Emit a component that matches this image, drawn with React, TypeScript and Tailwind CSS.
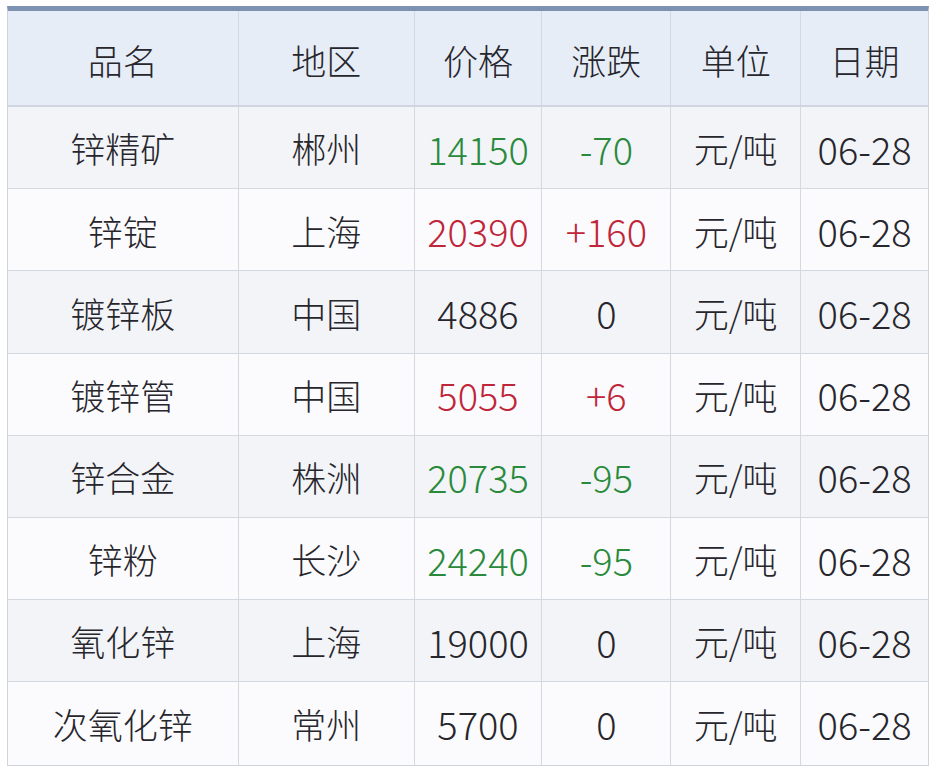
import React from "react";

type Row = { name: string; area: string; price: string; change: string; color: "green" | "red" | "black" };

const rows: Row[] = [
  { name: "锌精矿", area: "郴州", price: "14150", change: "-70", color: "green" },
  { name: "锌锭", area: "上海", price: "20390", change: "+160", color: "red" },
  { name: "镀锌板", area: "中国", price: "4886", change: "0", color: "black" },
  { name: "镀锌管", area: "中国", price: "5055", change: "+6", color: "red" },
  { name: "锌合金", area: "株洲", price: "20735", change: "-95", color: "green" },
  { name: "锌粉", area: "长沙", price: "24240", change: "-95", color: "green" },
  { name: "氧化锌", area: "上海", price: "19000", change: "0", color: "black" },
  { name: "次氧化锌", area: "常州", price: "5700", change: "0", color: "black" },
];

const widths = ["w-[230px]", "w-[176px]", "w-[128px]", "w-[129px]", "w-[130px]", "w-[128px]"];

function colorClass(c: Row["color"]) {
  if (c === "green") return "text-[#2a8a3c]";
  if (c === "red") return "text-[#c0263a]";
  return "text-[#26262c]";
}

export default function App() {
  const headers = ["品名", "地区", "价格", "涨跌", "单位", "日期"];
  return (
    <div className="w-[934px] h-[778px] bg-white pt-[6px] pl-[7px]" style={{ fontFamily: '"Noto Sans CJK SC", "Noto Sans", sans-serif' }}>
      <div className="w-[922px] border-t-[5px] border-t-[#7d92b0] border-l border-r border-b border-[#cfd4dc]">
        <div className="flex h-[96px] bg-[#e6edf7] border-b-2 border-[#cfd6e0]">
          {headers.map((h, i) => (
            <div
              key={h}
              className={`${widths[i]} flex items-center justify-center pt-[4px] text-[35px] font-light text-[#26262c] ${i > 0 ? "border-l border-[#d3d9e2]" : ""}`}
            >
              {h}
            </div>
          ))}
        </div>
        {rows.map((r, idx) => (
          <div
            key={r.name}
            className={`flex h-[82.2px] ${idx < rows.length - 1 ? "border-b" : ""} border-[#d4d8df] ${idx % 2 === 0 ? "bg-[#f3f4f8]" : "bg-[#fbfbfd]"}`}
          >
            <div className={`${widths[0]} flex items-center justify-center pt-[2px] text-[35px] font-light text-[#26262c]`}>{r.name}</div>
            <div className={`${widths[1]} flex items-center justify-center pt-[2px] text-[35px] font-light text-[#26262c] border-l border-[#d4d8df]`}>{r.area}</div>
            <div className={`${widths[2]} flex items-center justify-center pt-[1px] text-[38px] font-light border-l border-[#d4d8df] ${colorClass(r.color)}`}>{r.price}</div>
            <div className={`${widths[3]} flex items-center justify-center pt-[1px] text-[38px] font-light border-l border-[#d4d8df] ${colorClass(r.color)}`}>{r.change}</div>
            <div className={`${widths[4]} flex items-center justify-center pt-[2px] text-[35px] font-light text-[#26262c] border-l border-[#d4d8df]`}>元/吨</div>
            <div className={`${widths[5]} flex items-center justify-center pt-[1px] text-[38px] font-light text-[#26262c] border-l border-[#d4d8df]`}>06-28</div>
          </div>
        ))}
      </div>
    </div>
  );
}
